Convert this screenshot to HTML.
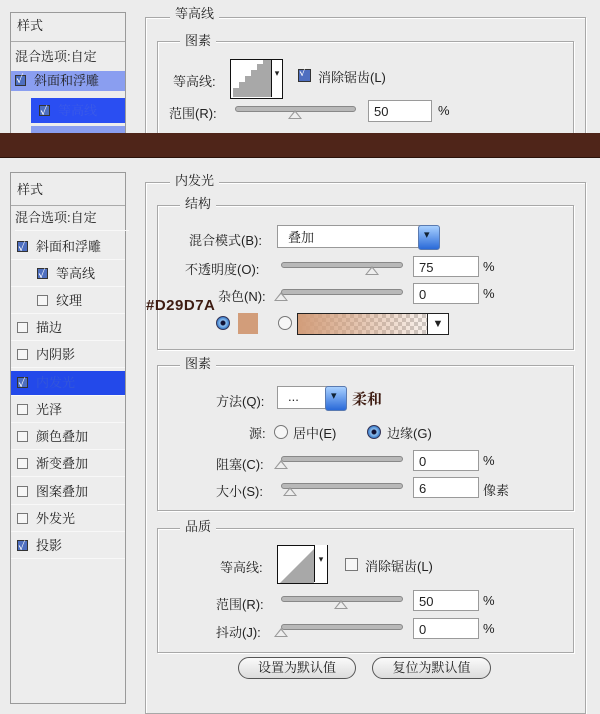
<!DOCTYPE html>
<html><head><meta charset="utf-8"><style>
body{margin:0;width:600px;height:699px;overflow:hidden;background:#ececec;font-family:"Liberation Sans","Noto Serif CJK SC","Noto Sans CJK SC",sans-serif;font-size:13px;color:#222;position:relative}
.a{position:absolute;white-space:nowrap}
.box{position:absolute;border:1px solid #a8a8a8;box-shadow:1px 1px 0 #fff inset,1px 1px 0 #fff}
.lbl{position:absolute;background:#ececec;padding:0 5px;font-size:13px;line-height:14px}
.panel{position:absolute;left:10px;width:114px;border:1px solid #9a9a9a;background:#ededed}
.row{position:absolute;left:0;width:114px;height:24px;line-height:24px;border-bottom:1px solid #f8f8f8;font-size:13px}
.cb{display:inline-block;width:9px;height:9px;border:1px solid #777;background:#f6f6f6;vertical-align:middle;margin:0 8px 0 8px;position:relative;top:-1px}
.cb.on{background:#4e6fc0;border-color:#333}
.cb.on::after{content:"✓";position:absolute;left:0;top:-6px;font-size:11px;color:#fff;font-weight:bold}
.inp{position:absolute;width:66px;height:21px;background:#fff;border:1px solid #9a9a9a;font-size:13px;line-height:21px;padding-left:5px;box-sizing:border-box}
.sl{position:absolute;height:4px;background:#b8b8b8;border:1px solid #888;border-radius:3px}
.th{position:absolute;width:0;height:0;border-left:7px solid transparent;border-right:7px solid transparent;border-bottom:9px solid #999}
.th::after{content:"";position:absolute;left:-5px;top:2px;border-left:5px solid transparent;border-right:5px solid transparent;border-bottom:6px solid #eee}
.rad{position:absolute;width:12px;height:12px;border:1px solid #777;border-radius:50%;background:#f6f6f6}
.rad.on{background:radial-gradient(circle,#113 0 2px,#8fc0f0 3px,#3a7bc8 6px);border-color:#335}
.btn{position:absolute;height:20px;border:1px solid #555;border-radius:11px;background:linear-gradient(#fafafa,#dcdcdc);text-align:center;line-height:20px;font-size:13px}
.bb{position:absolute;background:linear-gradient(#a8d0ff,#2a6ad8);border-radius:3px;border:1px solid #5a7ab0}
.bb::after{content:"▾";position:absolute;left:5px;top:2px;font-size:11px;color:#123}
</style></head><body>

<!-- TOP SECTION -->
<div class="panel" style="top:12px;height:125px">
  <div class="a" style="left:6px;top:2px">样式</div>
  <div class="a" style="left:0;top:28px;width:114px;border-top:1px solid #aaa"></div>
  <div class="a" style="left:4px;top:33px">混合选项:自定</div>
  <div class="a" style="left:0;top:58px;width:114px;height:20px;background:#8a9ef0;line-height:20px"><span class="cb on" style="margin-left:4px"></span>斜面和浮雕</div>
  <div class="a" style="left:20px;top:85px;width:94px;height:25px;background:#2a4ef2;line-height:25px;color:#3a5ae8"><span class="cb on"></span>等高线</div>
  <div class="a" style="left:20px;top:113px;width:94px;height:12px;background:#8a9ef0"></div>
</div>
<div class="box" style="left:145px;top:17px;width:439px;height:130px"></div>
<div class="lbl" style="left:170px;top:7px">等高线</div>
<div class="box" style="left:157px;top:41px;width:415px;height:110px"></div>
<div class="lbl" style="left:180px;top:34px">图素</div>
<div class="a" style="left:173px;top:71px">等高线:</div>
<div class="a" style="left:230px;top:59px;width:51px;height:38px;border:1px solid #111;background:#fff"></div>
<svg class="a" style="left:231px;top:60px" width="40" height="37"><path d="M2 37V28H8V22H14V16H20V10H26V4H32V0H40V37Z" fill="#a8a8a8"/></svg>
<div class="a" style="left:271px;top:60px;width:10px;height:37px;border-left:1px solid #111;background:#fff;font-size:9px;line-height:26px;text-align:center">▾</div>
<div class="cb on" style="position:absolute;left:298px;top:69px;margin:0;width:11px;height:11px"></div>
<div class="a" style="left:318px;top:67px">消除锯齿(L)</div>
<div class="a" style="left:169px;top:103px">范围(R):</div>
<div class="sl" style="left:235px;top:106px;width:119px"></div>
<div class="th" style="left:288px;top:110px"></div>
<div class="inp" style="left:368px;top:100px;width:64px;height:22px;line-height:22px">50</div>
<div class="a" style="left:438px;top:103px">%</div>

<div class="a" style="left:0;top:133px;width:600px;height:24px;background:#4f2519;border-bottom:1px solid #2a120a"></div>
<div class="a" style="left:0;top:158px;width:600px;height:14px;background:#ececec"></div>

<!-- BOTTOM SECTION -->
<div class="panel" style="top:172px;height:530px">
  <div class="a" style="left:6px;top:6px">样式</div>
  <div class="a" style="left:0;top:32px;width:114px;border-top:1px solid #aaa"></div>
  <div class="row" style="top:33px;left:4px">混合选项:自定</div>
  <div class="row" style="top:62px"><span class="cb on" style="margin-left:6px"></span>斜面和浮雕</div>
  <div class="row" style="top:89px"><span class="cb on" style="margin-left:26px"></span>等高线</div>
  <div class="row" style="top:116px"><span class="cb" style="margin-left:26px"></span>纹理</div>
  <div class="row" style="top:143px"><span class="cb" style="margin-left:6px"></span>描边</div>
  <div class="row" style="top:170px"><span class="cb" style="margin-left:6px"></span>内阴影</div>
  <div class="row" style="top:198px;background:#2349ea;color:#3558d8"><span class="cb on" style="margin-left:6px"></span>内发光</div>
  <div class="row" style="top:225px"><span class="cb" style="margin-left:6px"></span>光泽</div>
  <div class="row" style="top:252px"><span class="cb" style="margin-left:6px"></span>颜色叠加</div>
  <div class="row" style="top:279px"><span class="cb" style="margin-left:6px"></span>渐变叠加</div>
  <div class="row" style="top:307px"><span class="cb" style="margin-left:6px"></span>图案叠加</div>
  <div class="row" style="top:334px"><span class="cb" style="margin-left:6px"></span>外发光</div>
  <div class="row" style="top:361px"><span class="cb on" style="margin-left:6px"></span>投影</div>
</div>

<div class="box" style="left:145px;top:182px;width:439px;height:530px"></div>
<div class="lbl" style="left:170px;top:174px">内发光</div>
<div class="box" style="left:157px;top:205px;width:415px;height:143px"></div>
<div class="lbl" style="left:180px;top:197px">结构</div>
<div class="a" style="left:189px;top:230px">混合模式(B):</div>
<div class="a" style="left:277px;top:225px;width:160px;height:23px;background:#fff;border:1px solid #999;line-height:23px;padding-left:10px;box-sizing:border-box">叠加</div>
<div class="bb" style="left:418px;top:225px;width:20px;height:23px"></div>
<div class="a" style="left:185px;top:259px">不透明度(O):</div>
<div class="sl" style="left:281px;top:262px;width:120px"></div>
<div class="th" style="left:365px;top:266px"></div>
<div class="inp" style="left:413px;top:256px">75</div>
<div class="a" style="left:483px;top:259px">%</div>
<div class="a" style="left:218px;top:286px">杂色(N):</div>
<div class="sl" style="left:281px;top:289px;width:120px"></div>
<div class="th" style="left:274px;top:292px"></div>
<div class="inp" style="left:413px;top:283px">0</div>
<div class="a" style="left:483px;top:286px">%</div>
<div class="a" style="left:146px;top:297px;font-weight:bold;font-size:15px;color:#3e1c12;letter-spacing:0.5px">#D29D7A</div>
<div class="rad on" style="left:216px;top:316px"></div>
<div class="a" style="left:238px;top:313px;width:20px;height:21px;background:#d29d7a"></div>
<div class="rad" style="left:278px;top:316px"></div>
<div class="a" style="left:297px;top:313px;width:150px;height:20px;border:1px solid #222;background:linear-gradient(90deg,#d29d7a,rgba(210,157,122,0)),repeating-conic-gradient(#ccc 0 25%,#fff 0 50%) 0 0/8px 8px"></div>
<div class="a" style="left:427px;top:314px;width:20px;height:20px;border-left:1px solid #222;background:#fff;text-align:center;font-size:11px;line-height:20px">▼</div>

<div class="box" style="left:157px;top:365px;width:415px;height:144px"></div>
<div class="lbl" style="left:180px;top:357px">图素</div>
<div class="a" style="left:216px;top:391px">方法(Q):</div>
<div class="a" style="left:277px;top:386px;width:68px;height:23px;background:#fff;border:1px solid #999;line-height:20px;padding-left:10px;box-sizing:border-box">...</div>
<div class="bb" style="left:325px;top:386px;width:20px;height:23px"></div>
<div class="a" style="left:352px;top:388px;font-weight:bold;font-size:15px;color:#3e1c12">柔和</div>
<div class="a" style="left:249px;top:423px">源:</div>
<div class="rad" style="left:274px;top:425px"></div>
<div class="a" style="left:293px;top:423px">居中(E)</div>
<div class="rad on" style="left:367px;top:425px"></div>
<div class="a" style="left:387px;top:423px">边缘(G)</div>
<div class="a" style="left:216px;top:454px">阻塞(C):</div>
<div class="sl" style="left:281px;top:456px;width:120px"></div>
<div class="th" style="left:274px;top:460px"></div>
<div class="inp" style="left:413px;top:450px">0</div>
<div class="a" style="left:483px;top:453px">%</div>
<div class="a" style="left:216px;top:481px">大小(S):</div>
<div class="sl" style="left:281px;top:483px;width:120px"></div>
<div class="th" style="left:283px;top:487px"></div>
<div class="inp" style="left:413px;top:477px">6</div>
<div class="a" style="left:483px;top:480px">像素</div>

<div class="box" style="left:157px;top:528px;width:415px;height:123px"></div>
<div class="lbl" style="left:180px;top:520px">品质</div>
<div class="a" style="left:220px;top:557px">等高线:</div>
<div class="a" style="left:277px;top:545px;width:49px;height:37px;border:1px solid #111;background:#fff"></div>
<svg class="a" style="left:278px;top:546px" width="36" height="37"><path d="M2 37L36 3V37Z" fill="#a8a8a8"/></svg>
<div class="a" style="left:314px;top:545px;width:12px;height:37px;border-left:1px solid #111;background:#fff;font-size:9px;line-height:28px;text-align:center">▾</div>
<div class="cb" style="position:absolute;left:345px;top:558px;margin:0;width:11px;height:11px"></div>
<div class="a" style="left:365px;top:556px">消除锯齿(L)</div>
<div class="a" style="left:216px;top:594px">范围(R):</div>
<div class="sl" style="left:281px;top:596px;width:120px"></div>
<div class="th" style="left:334px;top:600px"></div>
<div class="inp" style="left:413px;top:590px">50</div>
<div class="a" style="left:483px;top:593px">%</div>
<div class="a" style="left:216px;top:622px">抖动(J):</div>
<div class="sl" style="left:281px;top:624px;width:120px"></div>
<div class="th" style="left:274px;top:628px"></div>
<div class="inp" style="left:413px;top:618px">0</div>
<div class="a" style="left:483px;top:621px">%</div>

<div class="btn" style="left:238px;top:657px;width:116px">设置为默认值</div>
<div class="btn" style="left:372px;top:657px;width:117px">复位为默认值</div>
</body></html>
